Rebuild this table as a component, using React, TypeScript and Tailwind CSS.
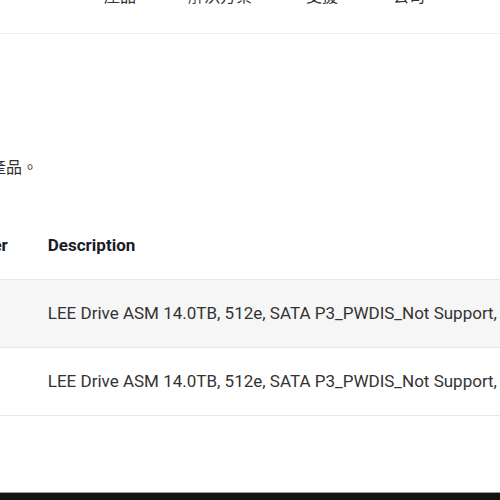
const FONT = "font-['Roboto','Noto_Sans_CJK_TC',sans-serif]";

const NAV = ["產品", "解決方案", "支援", "公司"];

const ROWS = [
  { part: "LEE-14T-512E-P3", desc: "LEE Drive ASM 14.0TB, 512e, SATA P3_PWDIS_Not Support, 7200RPM, 3.5\"" },
  { part: "LEE-14T-512E-P3S", desc: "LEE Drive ASM 14.0TB, 512e, SATA P3_PWDIS_Not Support, 7200RPM, SED" },
];

export default function App() {
  return (
    <div className={`w-[500px] h-[500px] overflow-hidden bg-white flex flex-col ${FONT}`}>
      {/* Top nav, scrolled partly out of view */}
      <header className="h-[34px] shrink-0 border-b border-[#efefef] overflow-hidden">
        <nav className="flex ml-[104px] mt-[-15px] text-[16px] leading-6 text-[#333]">
          <span>{NAV[0]}</span>
          <span className="ml-[52px]">{NAV[1]}</span>
          <span className="ml-[54px]">{NAV[2]}</span>
          <span className="ml-[55px]">{NAV[3]}</span>
        </nav>
      </header>

      <main className="flex-1 flex flex-col">
        <p className="mt-[122px] ml-[-202px] w-[240px] text-right whitespace-nowrap text-[16px] leading-6 text-[#333]">
          以下列出與此型號相容的產品。
        </p>

        <table className="mt-[31px] ml-[-110px] border-collapse whitespace-nowrap text-[17px] leading-6">
          <thead>
            <tr className="h-[68px] border-b border-[#e6e6e6]">
              <th className="w-[145px] px-5 text-left font-bold text-[#1b1b2a]">Part Number</th>
              <th className="px-5 text-left font-bold text-[#1b1b2a]">Description</th>
            </tr>
          </thead>
          <tbody>
            {ROWS.map((r, i) => (
              <tr
                key={r.part}
                className={`h-[68px] border-b border-[#e6e6e6] ${i % 2 === 0 ? "bg-[#f6f6f6]" : "bg-white"}`}
              >
                <td className="px-5 text-[#333]"></td>
                <td className="px-5 text-[#333]">{r.desc}</td>
              </tr>
            ))}
          </tbody>
        </table>
      </main>

      {/* Footer edge */}
      <footer className="h-[8px] shrink-0 border-t border-[#9a9a9a] bg-[#121212]" />
    </div>
  );
}
